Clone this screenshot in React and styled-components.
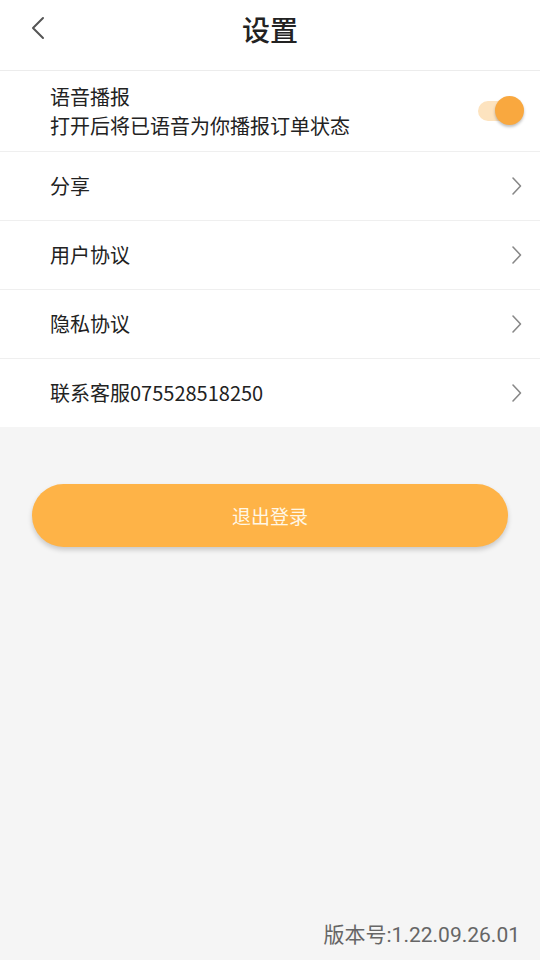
import React from 'react'
import styled, { createGlobalStyle } from 'styled-components'

const Global = createGlobalStyle`
html, body {
  margin: 0;
  padding: 0;
  background: #f5f5f5;
}
body {
  font-family: "Noto Sans CJK SC", "Noto Sans", sans-serif;
}
`

const Page = styled.div`
width: 540px;
height: 960px;
display: flex;
flex-direction: column;
background: #f5f5f5;
`

const Header = styled.div`
height: 70px;
background: #fff;
display: flex;
align-items: center;
justify-content: center;
position: relative;
border-bottom: 1px solid #ececec;
`

const Back = styled.div`
position: absolute;
left: 27px;
top: 14px;
width: 24px;
height: 28px;
`

const Title = styled.div`
font-size: 28px;
font-weight: 500;
color: #222;
margin-top: -12px;
`

const List = styled.div`
background: #fff;
display: flex;
flex-direction: column;
`

const Row = styled.div`
height: ${p => p.tall ? 80 : 68}px;
display: flex;
align-items: center;
justify-content: space-between;
padding: 0 16px 0 50px;
border-bottom: ${p => p.last ? 'none' : '1px solid #efefef'};
`

const Label = styled.div`
font-size: 20px;
color: #222;
line-height: ${p => p.stacked ? 29 : 26}px;
font-family: "Noto Sans CJK SC", sans-serif;
`

const Stack = styled.div`
display: flex;
flex-direction: column;
`

const Toggle = styled.div`
position: relative;
width: 46px;
height: 28px;
`

const Track = styled.div`
position: absolute;
left: 0;
top: 4px;
width: 40px;
height: 20px;
border-radius: 10px;
background: #fde3bf;
`

const Knob = styled.div`
position: absolute;
right: 0;
top: -1px;
width: 29px;
height: 29px;
border-radius: 50%;
background: #f9a83f;
box-shadow: 0 2px 3px rgba(0,0,0,0.25);
`

const Body = styled.div`
flex: 1;
display: flex;
flex-direction: column;
padding: 57px 32px 0 32px;
`

const Logout = styled.div`
height: 63px;
border-radius: 32px;
background: #feb347;
color: #fff7e6;
font-size: 19px;
display: flex;
align-items: center;
justify-content: center;
box-shadow: 0 3px 5px rgba(0,0,0,0.18);
`

const Spacer = styled.div`
flex: 1;
`

const Version = styled.div`
text-align: right;
font-size: 21px;
color: #666;
padding: 0 20px 12px 0;
font-family: "Roboto", "Noto Sans CJK SC", sans-serif;
`

const Chevron = ({ left }) => (
  <svg width="24" height="28" viewBox="0 0 24 28">
    <path d={left ? 'M16 4 L6 14 L16 24' : 'M8 4 L18 14 L8 24'} fill="none" stroke="#555" strokeWidth="2" strokeLinecap="round" strokeLinejoin="round" />
  </svg>
)

const SmallChevron = styled.div`
width: 16px;
height: 22px;
display: flex;
`

const Arrow = () => (
  <SmallChevron>
    <svg width="16" height="22" viewBox="0 0 16 22">
      <path d="M5 3 L12.5 11 L5 19" fill="none" stroke="#888" strokeWidth="1.6" strokeLinecap="round" strokeLinejoin="round" />
    </svg>
  </SmallChevron>
)

const items = ['分享', '用户协议', '隐私协议', '联系客服075528518250']

export default () =>
  <Page>
    <Global />
    <Header>
      <Back><Chevron left /></Back>
      <Title>设置</Title>
    </Header>
    <List>
      <Row tall>
        <Stack>
          <Label stacked>语音播报</Label>
          <Label stacked>打开后将已语音为你播报订单状态</Label>
        </Stack>
        <Toggle><Track /><Knob /></Toggle>
      </Row>
      {items.map((t, i) =>
        <Row key={t} last={i === items.length - 1}>
          <Label>{t}</Label>
          <Arrow />
        </Row>
      )}
    </List>
    <Body>
      <Logout>退出登录</Logout>
      <Spacer />
    </Body>
    <Version>版本号:1.22.09.26.01</Version>
  </Page>
